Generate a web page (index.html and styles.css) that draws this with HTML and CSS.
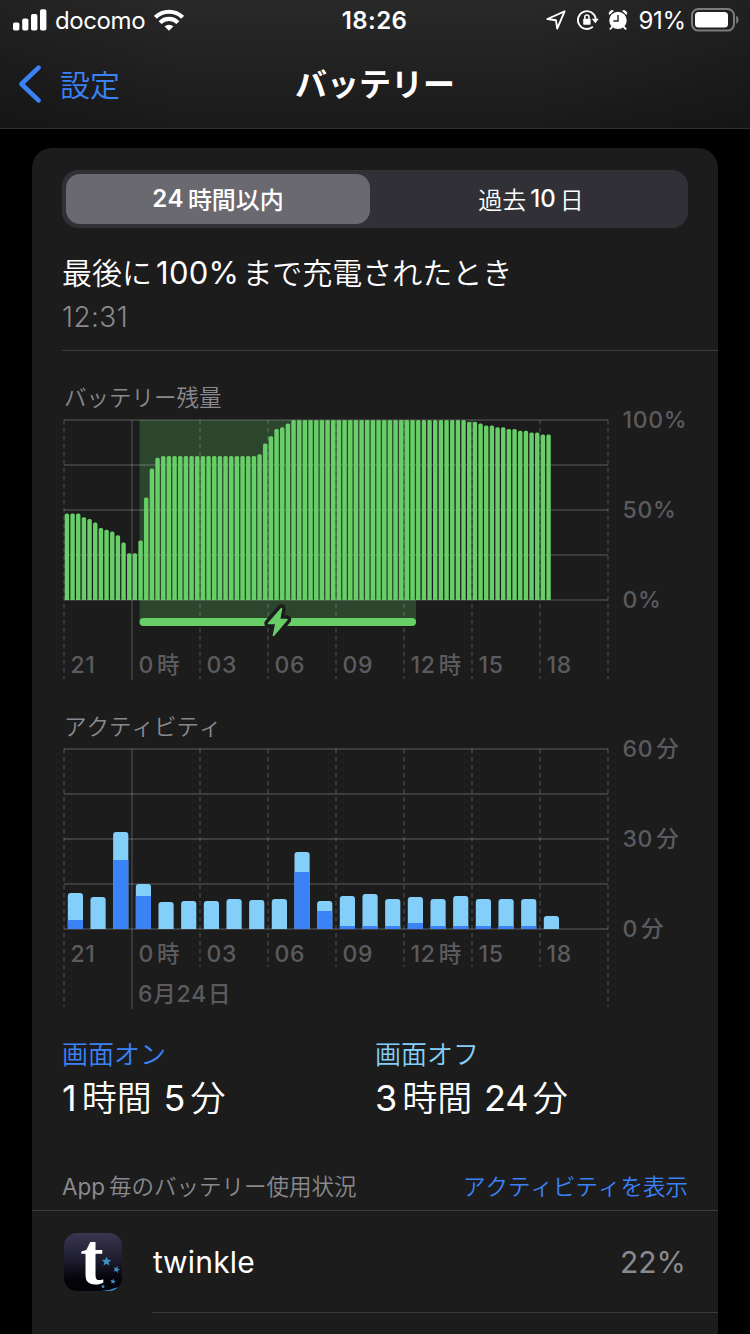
FILE: index.html
```html
<!DOCTYPE html>
<html lang="ja">
<head>
    <meta charset="UTF-8">
    <meta name="viewport" content="width=device-width, initial-scale=1.0">
    <title>バッテリー</title>
    <link rel="stylesheet" href="styles.css">
</head>
<body>

    <header class="header">
        <div class="status">
            <div class="status-left">
                <svg class="signal" width="34" height="22" viewBox="0 0 34 22" fill="#fff">
                    <rect x="0" y="13.5" width="6.4" height="8" rx="1.8"/>
                    <rect x="9.2" y="9.5" width="6.2" height="12" rx="1.8"/>
                    <rect x="18" y="5" width="6.4" height="16.5" rx="1.8"/>
                    <rect x="27" y="0.2" width="6.4" height="21.3" rx="1.8"/>
                </svg>
                <span class="carrier">docomo</span>
                <svg class="wifi" width="30" height="22" viewBox="0 0 30 22" fill="none" stroke="#fff" stroke-width="4.1">
                    <path d="M1.4 8.3a19.3 19.3 0 0 1 27.2 0"/>
                    <path d="M6.1 13.6a12.6 12.6 0 0 1 17.8 0"/>
                    <path d="M15 21.8l-4.4-4.2a6.2 6.2 0 0 1 8.8 0z" fill="#fff" stroke="none"/>
                </svg>
            </div>
            <div class="clock">18:26</div>
            <div class="status-right">
                <svg class="location" width="20" height="20" viewBox="0 0 20 20" fill="none" stroke="#fff" stroke-width="1.9" stroke-linejoin="round">
                    <path d="M18.6 1.4L1.4 9l8.6 1.3 1.2 8.3z"/>
                </svg>
                <svg class="lock" width="22" height="20" viewBox="0 0 22 20" fill="none" stroke="#fff" stroke-width="1.9">
                    <path d="M15.9 16.6A8.9 8.9 0 1 1 18.7 9"/>
                    <path d="M14.8 8.8h7l-3.5 4.5z" fill="#fff" stroke="none"/>
                    <rect x="6.2" y="8.8" width="7.4" height="6" rx="0.8" fill="#fff" stroke="none"/>
                    <path d="M7.8 9.3V7.2a2.1 2.1 0 0 1 4.2 0v2.1" stroke-width="1.5"/>
                </svg>
                <svg class="alarm" width="20" height="20" viewBox="0 0 20 20">
                    <circle cx="10" cy="10.4" r="8.7" fill="#fff"/>
                    <path d="M1.4 4.4A2.8 2.8 0 0 1 5.4 1zM18.6 4.4A2.8 2.8 0 0 0 14.6 1z" fill="#fff" stroke="#fff" stroke-linejoin="round"/>
                    <path d="M4.2 16.8l-1.8 2M15.8 16.8l1.8 2" stroke="#fff" stroke-width="2" stroke-linecap="round"/>
                    <path d="M10 5v6H5.4" fill="none" stroke="#242424" stroke-width="1.4"/>
                </svg>
                <span class="percent">91%</span>
                <svg class="battery" width="48" height="24" viewBox="0 0 48 24">
                    <rect x="1" y="1" width="42" height="21.6" rx="6.5" fill="none" stroke="#7c7c7c" stroke-width="2"/>
                    <rect x="4" y="4" width="33" height="15.6" rx="3.6" fill="#fff"/>
                    <path d="M45.2 7.8c3 1 3 7 0 8z" fill="#7c7c7c"/>
                </svg>
            </div>
        </div>
        <nav class="nav">
            <a class="back" href="#">
                <svg width="24" height="40" viewBox="0 0 24 40" fill="none" stroke="#3b82f7" stroke-width="4.6" stroke-linecap="round" stroke-linejoin="round">
                    <path d="M20.6 3.6L3.4 20l17.2 16.4"/>
                </svg>
                <span>設定</span>
            </a>
            <h1>バッテリー</h1>
        </nav>
    </header>

    <main class="card">
        <div class="segmented">
            <div class="segment selected"><span class="num">24</span>時間以内</div>
            <div class="segment">過去<span class="num">10</span>日</div>
        </div>

        <section class="last-charge">
            <div class="label">最後に<span class="num">100%</span>まで充電されたとき</div>
            <div class="time">12:31</div>
        </section>

        <section class="chart level">
            <h2>バッテリー残量</h2>
            <svg id="level" width="640" height="272" viewBox="62 410 640 272"></svg>
        </section>

        <section class="chart activity">
            <h2>アクティビティ</h2>
            <svg id="activity" width="640" height="272" viewBox="62 739 640 272"></svg>
        </section>

        <section class="totals">
            <div class="total on">
                <div class="name">画面オン</div>
                <div class="value"><span class="num">1</span>時間 <span class="num">5</span>分</div>
            </div>
            <div class="total off">
                <div class="name">画面オフ</div>
                <div class="value"><span class="num">3</span>時間 <span class="num">24</span>分</div>
            </div>
        </section>

        <div class="list-head">
            <span class="list-title"><span class="num">App</span>毎のバッテリー使用状況</span>
            <a href="#">アクティビティを表示</a>
        </div>

        <div class="app">
            <svg class="app-icon" width="58" height="58" viewBox="0 0 58 58">
                <defs>
                    <linearGradient id="night" x1="0" y1="0" x2="0" y2="1">
                        <stop offset="0" stop-color="#3a3652"/>
                        <stop offset="0.5" stop-color="#1b1a2a"/>
                        <stop offset="0.8" stop-color="#03030a"/>
                    </linearGradient>
                    <path id="star" d="M0-5l1.3 3.3 3.5.2-2.7 2.2.9 3.4L0 2.2l-3 1.9.9-3.4-2.7-2.2 3.5-.2z"/>
                </defs>
                <rect width="58" height="58" rx="13" fill="url(#night)"/>
                <path d="M37 58q9-.5 17-4-3 4-9 4z" fill="#3d8fc4"/>
                <g fill="#3d8fc4">
                    <use href="#star" transform="translate(42.5 28.5)"/>
                    <use href="#star" transform="translate(52.5 36.5) rotate(20) scale(.72)"/>
                    <use href="#star" transform="translate(49 48.5) rotate(10) scale(.6)"/>
                    <use href="#star" transform="translate(39 53.5) scale(.45)"/>
                </g>
                <text class="logo" transform="translate(16.2 50.8) scale(1 1.06)">t</text>
            </svg>
            <div class="app-row">
                <span class="app-name">twinkle</span>
                <span class="app-usage">22%</span>
            </div>
        </div>
    </main>

    <script src="charts.js"></script>
</body>
</html>
```
FILE: styles.css
```css
*{
    box-sizing: border-box;
}
html, body{
    width: 100%;
    height: 100%;
    overflow: hidden;
    padding: 0;
    margin: 0;
}

body{
    display: flex;
    flex-direction: column;
    font-family: Inter, 'Noto Sans CJK JP', sans-serif;
    font-weight: 350;
    background-color: #000;
    color: #fff;
    font-kerning: none;
}
svg{
    display: block;
    flex: none;
}
a{
    color: #3b82f7;
    text-decoration: none;
}
h1, h2{
    margin: 0;
}

.header{
    flex: none;
    height: 129px;
    border-bottom: 1px solid #303030;
    background: linear-gradient(90deg, rgba(0,0,0,.18), transparent 25%, transparent 70%, rgba(0,0,0,.2)),
        linear-gradient(#292929, #1a1a1a);
}

.status{
    height: 40px;
    padding: 0 11px 0 13px;
    display: grid;
    grid-template-columns: 1fr auto 1fr;
    align-items: center;
}
.status-left, .status-right{
    display: flex;
    align-items: center;
}
.status-right{
    justify-content: flex-end;
}
.carrier{
    margin-left: 8px;
    font-size: 24px;
    font-weight: 400;
    letter-spacing: -.4px;
}
.wifi{
    margin-left: 9px;
}
.clock{
    padding-right: 3px;
    font-size: 24px;
    font-weight: 600;
    letter-spacing: .4px;
}
.lock{
    margin-left: 11px;
}
.alarm{
    margin-left: 9px;
}
.percent{
    margin: 0 5px 0 10px;
    font-size: 24px;
    font-weight: 400;
    letter-spacing: -.2px;
}

.nav{
    height: 88px;
    display: grid;
    grid-template-columns: 1fr auto 1fr;
    align-items: center;
    padding: 0 18px;
}
.back{
    display: flex;
    align-items: center;
    gap: 18px;
    font-size: 30px;
}
.back span{
    padding-bottom: 2px;
}
.nav h1{
    padding-bottom: 4px;
    font-size: 32px;
    font-weight: 700;
}

.card{
    flex: 1;
    margin: 19px 32px 0;
    padding-top: 22px;
    border-radius: 20px 20px 0 0;
    background-color: #1c1c1c;
}

.segmented{
    margin: 0 30px;
    height: 58px;
    padding: 4px;
    display: flex;
    border-radius: 16px;
    background-color: #313036;
}
.segment{
    width: 304px;
    height: 50px;
    padding-bottom: 2px;
    display: flex;
    align-items: center;
    justify-content: center;
    font-size: 24px;
    font-weight: 350;
}
.segment:last-child{
    flex: 1;
    padding-left: 8px;
}
.segment .num{
    margin: 0 4px;
    padding-top: 1px;
    font-weight: 500;
}
.segment.selected{
    border-radius: 14px;
    font-weight: 500;
    background-color: #6a696f;
}
.selected .num{
    margin-left: 0;
    font-weight: 600;
    letter-spacing: .4px;
}

.last-charge{
    margin-left: 30px;
    height: 123px;
    padding-top: 24px;
    border-bottom: 1px solid #3b3b3c;
}
.last-charge .label{
    height: 42px;
    line-height: 42px;
    font-size: 30px;
}
.last-charge .num{
    margin: 0 3px 0 4px;
    font-size: 31px;
    font-weight: 400;
    letter-spacing: .3px;
}
.time{
    height: 44px;
    line-height: 46px;
    font-size: 28px;
    letter-spacing: .4px;
    color: #8a8a8e;
}

.chart{
    margin-left: 30px;
}
.chart h2{
    height: 26px;
    line-height: 28px;
    padding-left: 2px;
    font-size: 22.5px;
    font-weight: 350;
    color: #8a8a8e;
}
.level{
    padding-top: 33px;
}
.activity{
    padding-top: 31px;
}
.chart svg{
    overflow: visible;
}
.chart svg text{
    font-size: 23px;
    font-weight: 450;
    letter-spacing: .7px;
    fill: #5b5b5f;
}
.chart svg .unit{
    font-size: 22.5px;
    font-weight: 500;
}
.grid{
    stroke: rgba(255,255,255,.14);
    stroke-width: 2;
}
.tick{
    stroke: rgba(255,255,255,.17);
    stroke-width: 1.5;
}
.dashed{
    stroke-dasharray: 4.5 3.5;
}

.totals{
    display: flex;
    height: 150px;
    padding: 28px 30px 0;
}
.total{
    width: 313px;
}
.total .name{
    height: 32px;
    line-height: 32px;
    font-size: 26px;
}
.total .value{
    height: 54px;
    line-height: 54px;
    font-size: 35px;
}
.total .num{
    margin-right: 5px;
    font-size: 36px;
    font-weight: 400;
}
.total .num:last-child{
    margin-left: 2px;
}
.off .num:last-child{
    letter-spacing: -.8px;
}
.on .name{
    color: #3b82f7;
}
.off .name{
    color: #84cffa;
}

.list-head{
    display: flex;
    justify-content: space-between;
    align-items: center;
    height: 50px;
    padding: 0 30px 2px;
    border-bottom: 1px solid #3b3b3c;
    font-size: 22.5px;
    color: #8a8a8e;
}
.list-head .num{
    margin-right: 4px;
    font-weight: 400;
}

.app{
    display: flex;
    align-items: center;
    height: 102px;
    padding-left: 32px;
}
.app-row{
    flex: 1;
    display: flex;
    align-items: center;
    justify-content: space-between;
    height: 102px;
    margin-left: 30px;
    padding-right: 32px;
    border-bottom: 1px solid #3b3b3c;
    font-size: 30px;
    font-weight: 400;
}
.app-name{
    padding-left: 1px;
    letter-spacing: .2px;
}
.app-usage{
    color: #8a8a8e;
}
.logo{
    font-family: 'Liberation Serif', serif;
    font-size: 70px;
    font-weight: 700;
    fill: #fff;
}
```
FILE: charts.js
```js
const LEFT = 64
const RIGHT = 608
const HOUR = (RIGHT - LEFT) / 24

// battery level in %, one value every 15 minutes
const levels = [
    48, 48, 48, 46, 45, 43, 40, 39, 38, 36, 32, 26, 26, 33, 57, 73, 79,
    ...Array(17).fill(80),
    81, 87, 91, 95, 96, 98,
    ...Array(31).fill(100),
    99, 99, 98, 97, 97, 96, 96, 95, 95, 94, 94, 93, 93, 92, 92
]

// [total, screen on] in minutes, one value per hour
const usage = [
    [12, 3], [10.7, 0], [32.3, 23], [15, 11], [9, 0], [9.3, 0], [9.3, 0], [10, 0],
    [9.7, 0], [10, 0], [25.7, 19], [9.3, 6], [11, 1], [11.7, 1], [10, 1], [10.7, 2],
    [10, 1], [11, 1], [10, 1], [10, 1], [10, 1], [4.3, 0]
]

const hours = ['21', '0時', '03', '06', '09', '12時', '15', '18']

const line = (x1, y1, x2, y2, cls) => `<line class="${cls}" x1="${x1}" y1="${y1}" x2="${x2}" y2="${y2}"/>`

// digits and their unit are spaced apart
const label = (x, y, text) => {
    const m = text.match(/^(\d+%?)(\D?)$/)
    const unit = m[2] ? `<tspan class="unit" dx="3">${m[2]}</tspan>` : ''
    return `<text x="${x}" y="${y}">${m[1]}${unit}</text>`
}

const grid = (top, short, long, edge) => {
    let out = ''
    for (let i = 0; i < 5; i++) out += line(LEFT, top + i * 45, RIGHT, top + i * 45, 'grid')
    for (let i = 0; i < 9; i++) {
        const x = LEFT + i * 3 * HOUR
        if (i === 1) out += line(x, top, x, long, 'tick')
        else out += line(x, top, x, i === 0 || i === 8 ? edge : short, 'tick dashed')
    }
    return out
}

const roundTop = (x, y, w, bottom, r, fill) =>
    `<path fill="${fill}" d="M${x} ${bottom}V${y + r}q0 ${-r} ${r} ${-r}h${w - 2 * r}q${r} 0 ${r} ${r}V${bottom}z"/>`

const drawLevel = () => {
    const top = 420
    const bottom = 600
    const bolt = 'M281.5 608.5L268.5 623.5h7.5l-2.5 12L287 619.5h-7.5z'
    let out = '<rect x="139.5" y="420" width="276.5" height="202" fill="#2b462d"/>'
    out += grid(top, 679, 680, 679)
    levels.forEach((v, i) => {
        out += roundTop(LEFT + i * HOUR / 4 + .7, bottom - v * 1.8, 4.4, bottom, 1.6, '#68ce67')
    })
    out += '<rect x="139.5" y="618" width="276.5" height="8" rx="4" fill="#68ce67"/>'
    out += `<path d="${bolt}" fill="#1c1c1c" stroke="#1c1c1c" stroke-width="8.5" stroke-linejoin="round"/>`
    out += `<path d="${bolt}" fill="#68ce67" stroke="#68ce67" stroke-width="1.6" stroke-linejoin="round"/>`
    hours.forEach((h, i) => {
        out += label(LEFT + i * 3 * HOUR + 6.5, 673, h)
    })
    out += label(622.5, 428, '100%') + label(622.5, 518, '50%') + label(622.5, 608, '0%')
    document.querySelector('#level').innerHTML = out
}

const drawActivity = () => {
    const top = 749
    const bottom = 929
    let out = grid(top, 967, 1009, 1007)
    usage.forEach(([total, on], i) => {
        const x = LEFT + i * HOUR + 3.8
        out += roundTop(x, bottom - total * 3, 15.2, bottom, 3, '#84cffa')
        if (on) out += `<rect x="${x}" y="${bottom - on * 3}" width="15.2" height="${on * 3}" fill="#3b82f7"/>`
    })
    hours.forEach((h, i) => {
        out += label(LEFT + i * 3 * HOUR + 6.5, 962, h)
    })
    out += '<text x="138" y="1002">6<tspan class="unit">月</tspan>24<tspan class="unit" dx="1">日</tspan></text>'
    out += label(622.5, 757, '60分') + label(622.5, 847, '30分') + label(622.5, 937, '0分')
    document.querySelector('#activity').innerHTML = out
}

drawLevel()
drawActivity()
```
